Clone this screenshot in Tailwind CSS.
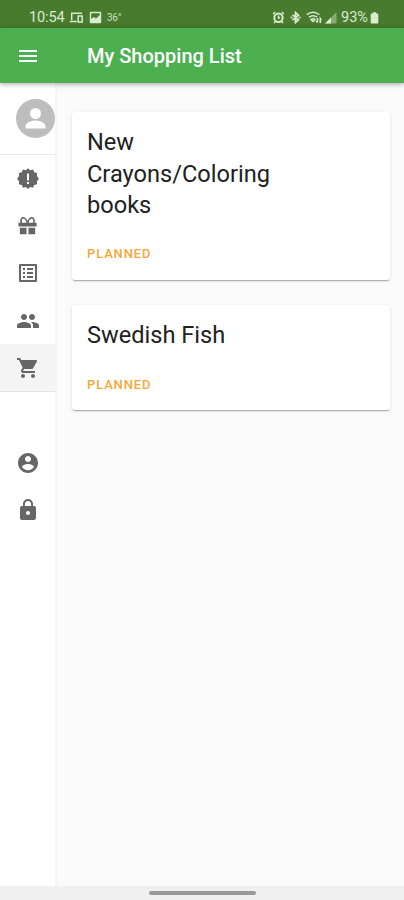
<!DOCTYPE html>
<html lang="en">
<head>
<meta charset="utf-8">
<title>My Shopping List</title>
<script src="https://cdn.jsdelivr.net/npm/@tailwindcss/browser@4"></script>
</head>
<body class="w-[404px] h-[900px] overflow-hidden flex flex-col bg-[#fafafa] font-['Roboto',sans-serif] text-[#212121]">
<div class="h-7 shrink-0 bg-[#487b2d] flex items-center pl-[29px] pr-[26px] pt-[8px] text-[#d9ecd0]">
  <span class="text-[14.500px] leading-5 w-[36px] whitespace-nowrap tracking-[-0.1px]">10:54</span>
  <svg class="w-[15px] h-[13px] ml-1 -mt-px" viewBox="0 0 15 13" fill="none" stroke="currentColor" stroke-width="1.500"><path d="M2.700 9V2.200H13M0.800 10.500h7M9.200 5h4v6h-4z"/></svg>
  <svg class="w-[13px] h-[13px] ml-[5px] -mt-px" viewBox="0 0 13 13"><path fill="currentColor" fill-rule="evenodd" d="M1.800.8h9.400q1 0 1 1v9.400q0 1-1 1H1.800q-1 0-1-1V1.800q0-1 1-1zM2.200 2.200v5.800l2.800-2 2 1.500 3.800-3.500V2.200z"/></svg>
  <span class="text-[10px] leading-5 ml-[5px] tracking-tight opacity-90">36°</span>
  <span class="flex-1"></span>
  <svg class="w-[13px] h-[13px] -mt-px" viewBox="0 0 13 13" fill="none" stroke="currentColor" stroke-width="2"><circle cx="6.500" cy="6.700" r="4.200"/><path stroke-width="1.500" d="M6.500 4.500v2.500h1.700M1 3l2.300-2M12 3L9.700 1M2 12l1.500-1.800M11 12L9.500 10.200"/></svg>
  <svg class="w-[11px] h-[13px] ml-[5px] -mt-px" viewBox="0 0 11 13" fill="none" stroke="currentColor" stroke-width="1.700"><path d="M2.500 3.800l6 5-3 2.700v-10l3 2.700-6 5M.4 6.500h2M8.600 6.500h2"/></svg>
  <svg class="w-[16px] h-[13px] ml-[5px] -mt-px" viewBox="0 0 16 13" fill="none" stroke="currentColor" stroke-width="1.500"><path d="M.8 3.700Q7 -1 13.300 3.700M3 6.200q4-3 8 0M5 8.500q2-1.600 4 0L7 10.500zM11.500 7v4.500M10 10l1.500 1.500M14.300 12V7.500l1.200 1.500"/></svg>
  <svg class="w-[12px] h-[12px] ml-[3px] -mt-px" viewBox="0 0 12 12"><path fill="#88ab76" d="M0 11.500L11.500 0v11.500z"/><path fill="currentColor" d="M0 11.500L6 5.500v6z"/></svg>
  <span class="text-[14.500px] leading-5 ml-[4px] w-[28px] whitespace-nowrap">93%</span>
  <svg class="w-[9px] h-[12px] ml-px -mr-px -mt-px" viewBox="0 0 9 12"><path fill="currentColor" d="M2.800.3h3.400v1.200h1.300q.8 0 .8.800v8.400q0 .8-.8.800h-6q-.8 0-.8-.8V2.300q0-.8.8-.8h1.300z"/></svg>
</div>
<header class="relative z-10 h-[55px] shrink-0 bg-[#4caf50] flex items-center shadow-[0_1px_5px_rgba(0,0,0,0.35)]">
  <svg class="w-[24px] h-6 ml-4" viewBox="0 0 24 24" fill="#fff"><path d="M3 18h18v-2H3v2zm0-5h18v-2H3v2zm0-7v2h18V6H3z"/></svg>
  <h1 class="ml-[47px] text-[20px] leading-6 font-medium text-white whitespace-nowrap">My Shopping List</h1>
</header>
<div class="flex-1 min-h-0 flex">
  <nav class="w-[57px] shrink-0 bg-white border-r-2 border-[#f5f5f5] text-[#666]">
    <div class="h-[72px] pl-4 pt-4 border-b border-[#e8e8e8]">
      <svg class="w-[39px] h-[39px]" viewBox="0 0 39 39"><circle cx="19.500" cy="19.500" r="19.500" fill="#bdbdbd"/><circle cx="19.500" cy="14.500" r="5.500" fill="#fff"/><path fill="#fff" d="M9.500 29.500v-2c0-4 6-6 10-6s10 2 10 6v2z"/></svg>
    </div>
    <div class="h-[47px] flex items-center pl-[16px]"><svg class="w-6 h-6" viewBox="0 0 24 24" fill="currentColor"><path fill-rule="evenodd" d="M12 1.300l2.200 1.900 2.900-.7 1.100 2.700 2.900.9-.2 3L23 12l-2.100 2.200.2 3-2.900.9-1.100 2.700-2.900-.7-2.200 1.900-2.200-1.900-2.900.7-1.100-2.700-2.900-.9.200-3L1 12l2.100-2.900-.2-3 2.900-.9 1.100-2.700 2.900.7zM11 6.500v7h2v-7zm0 8.500v2h2v-2z"/></svg></div>
    <div class="h-[47px] flex items-center pl-[16px]"><svg class="w-[23px] h-[23px]" viewBox="0 0 24 24" fill="currentColor"><path d="M2.500 9h19v4h-19zM4 14.300h7V21H4zM13 14.300h7V21h-7z"/><path fill="none" stroke="currentColor" stroke-width="1.700" d="M11.700 9.500C11.500 6.500 9.500 4 7.300 4S4.500 7.800 6 9.500M12.300 9.500C12.500 6.500 14.500 4 16.700 4s2.800 3.800 1.300 5.500"/></svg></div>
    <div class="h-[48px] flex items-center pl-[16px]"><svg class="w-[24px] h-[24px]" viewBox="0 0 24 24" fill="currentColor"><path d="M19 5v14H5V5h14m1.100-2H3.900c-.5 0-.9.400-.9.900v16.200c0 .4.400.9.900.9h16.200c.4 0 .9-.5.900-.9V3.900c0-.5-.5-.9-.9-.9zM11 7h6v2h-6V7zm0 4h6v2h-6v-2zm0 4h6v2h-6zM7 7h2v2H7zm0 4h2v2H7zm0 4h2v2H7z"/></svg></div>
    <div class="h-[47px] flex items-center pl-[16px]"><svg class="w-6 h-6" viewBox="0 0 24 24" fill="currentColor"><path d="M16 11c1.660 0 2.990-1.340 2.990-3S17.660 5 16 5c-1.660 0-3 1.340-3 3s1.340 3 3 3zm-8 0c1.660 0 2.990-1.340 2.990-3S9.660 5 8 5C6.340 5 5 6.340 5 8s1.340 3 3 3zm0 2c-2.330 0-7 1.170-7 3.500V19h14v-2.500c0-2.330-4.670-3.500-7-3.500zm8 0c-.29 0-.62.020-.97.050 1.160.84 1.970 1.970 1.970 3.450V19h6v-2.500c0-2.330-4.670-3.500-7-3.500z"/></svg></div>
    <div class="h-[48px] flex items-center pl-[16px] bg-[#f4f4f4] border-b border-[#e4e4e4]"><svg class="w-[24px] h-[24px]" viewBox="0 0 24 24" fill="currentColor"><path d="M7 18c-1.100 0-1.990.9-1.990 2S5.900 22 7 22s2-.9 2-2-.9-2-2-2zM1 2v2h2l3.600 7.590-1.350 2.450c-.16.280-.25.610-.25.960 0 1.100.9 2 2 2h12v-2H7.420c-.14 0-.25-.11-.25-.25l.03-.12.900-1.630h7.450c.75 0 1.410-.41 1.750-1.030l3.580-6.490c.08-.14.120-.31.120-.48 0-.55-.45-1-1-1H5.210l-.94-2H1zm16 16c-1.100 0-1.990.9-1.990 2s.89 2 1.990 2 2-.9 2-2-.9-2-2-2z"/></svg></div>
    <div class="mt-[47px] h-[47px] flex items-center pl-[16px]"><svg class="w-[24px] h-[24px]" viewBox="0 0 24 24" fill="currentColor"><path d="M12 2C6.480 2 2 6.480 2 12s4.480 10 10 10 10-4.480 10-10S17.520 2 12 2zm0 3c1.660 0 3 1.340 3 3s-1.340 3-3 3-3-1.340-3-3 1.340-3 3-3zm0 14.200c-2.500 0-4.710-1.280-6-3.220.03-1.990 4-3.080 6-3.080 1.990 0 5.970 1.090 6 3.080-1.290 1.940-3.500 3.220-6 3.220z"/></svg></div>
    <div class="h-[47px] flex items-center pl-[16px]"><svg class="w-[24px] h-[24px]" viewBox="0 0 24 24" fill="currentColor"><path d="M18 8h-1V6c0-2.760-2.240-5-5-5S7 3.240 7 6v2H6c-1.100 0-2 .9-2 2v10c0 1.100.9 2 2 2h12c1.100 0 2-.9 2-2V10c0-1.100-.9-2-2-2zm-6 9c-1.100 0-2-.9-2-2s.9-2 2-2 2 .9 2 2-.9 2-2 2zm3.100-9H8.900V6c0-1.710 1.390-3.100 3.100-3.100 1.710 0 3.100 1.390 3.100 3.100v2z"/></svg></div>
  </nav>
  <main class="flex-1 pl-[15px] pr-[14px] pt-[29px] flex flex-col gap-[25px]">
    <article class="h-[168px] bg-white rounded-[3px] pl-[15px] pt-[15px] shadow-[0_2px_1px_-1px_rgba(0,0,0,0.25),0_1px_3px_rgba(0,0,0,0.14)]">
      <h2 class="w-[230px] text-[23.600px] leading-[31.500px] font-normal">New Crayons/Coloring books</h2>
      <p class="mt-[22px] text-[13px] leading-5 font-medium tracking-[0.850px] text-[#f9a636]">PLANNED</p>
    </article>
    <article class="h-[105px] bg-white rounded-[3px] pl-[15px] pt-[15px] shadow-[0_2px_1px_-1px_rgba(0,0,0,0.25),0_1px_3px_rgba(0,0,0,0.14)]">
      <h2 class="text-[23.600px] leading-[31.500px] font-normal">Swedish Fish</h2>
      <p class="mt-[23px] text-[13px] leading-5 font-medium tracking-[0.850px] text-[#f9a636]">PLANNED</p>
    </article>
  </main>
</div>
<footer class="h-[14px] shrink-0 bg-[#f0f0f0] flex justify-center pt-[5px]"><div class="w-[107px] h-1 rounded-full bg-[#999]"></div></footer>
</body>
</html>
